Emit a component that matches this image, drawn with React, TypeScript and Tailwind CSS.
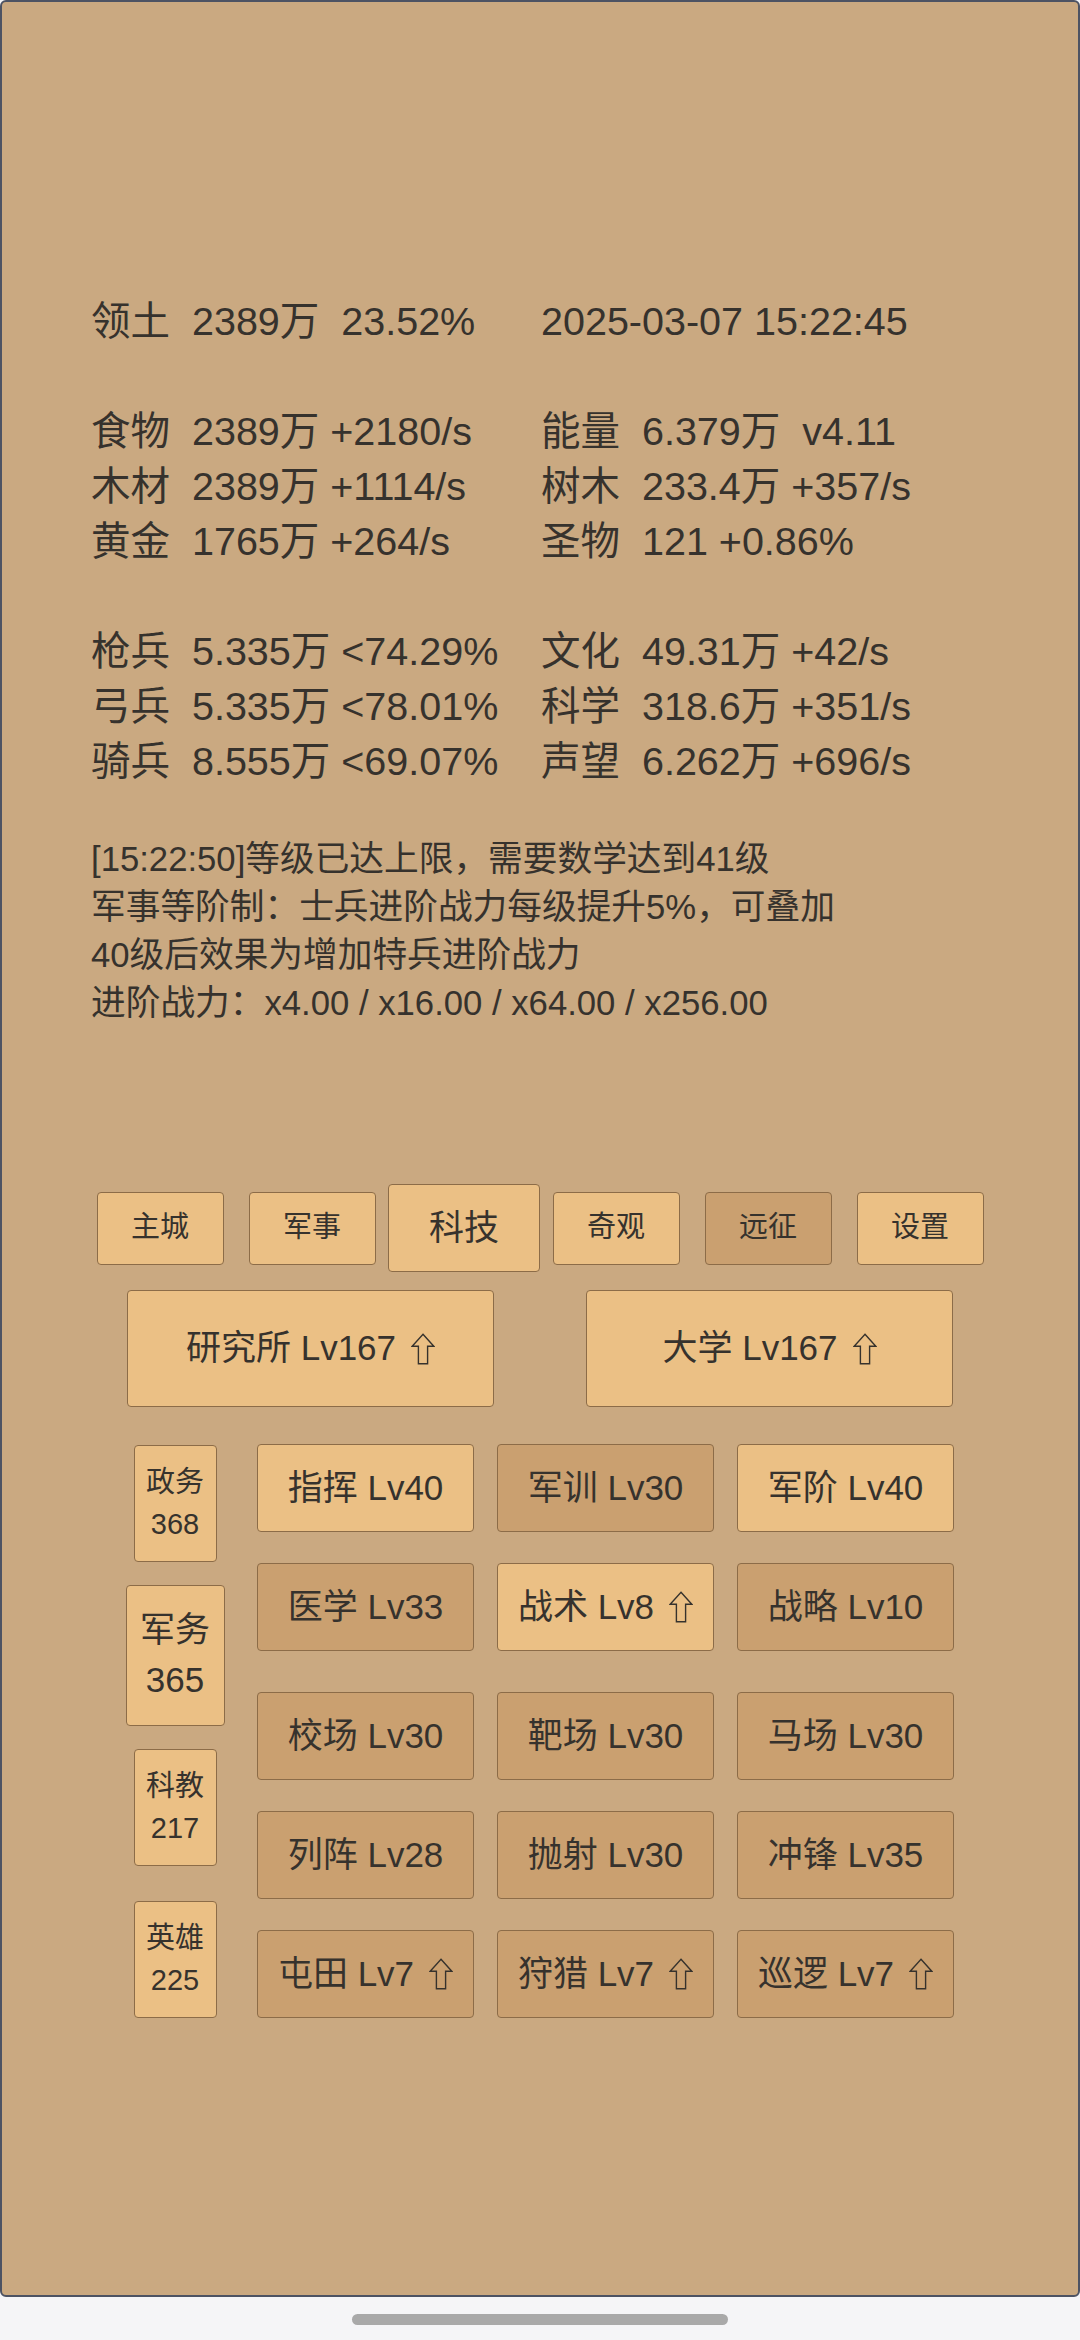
import React from "react";

const LIGHT = "bg-[#ebc085]";
const DARK = "bg-[#caa070]";

function Arrow() {
  return (
    <svg viewBox="0 0 24 32" className="w-[24px] h-[32px] ml-[15px] shrink-0" aria-hidden="true">
      <path
        d="M12 1.2 L22.8 13.2 L16.6 13.2 L16.6 30.8 L7.4 30.8 L7.4 13.2 L1.2 13.2 Z"
        fill="none"
        stroke="#36322d"
        strokeWidth="1.4"
        strokeLinejoin="miter"
      />
    </svg>
  );
}

const stats: [string, string][] = [
  ["领土  2389万  23.52%", "2025-03-07 15:22:45"],
  ["", ""],
  ["食物  2389万 +2180/s", "能量  6.379万  v4.11"],
  ["木材  2389万 +1114/s", "树木  233.4万 +357/s"],
  ["黄金  1765万 +264/s", "圣物  121 +0.86%"],
  ["", ""],
  ["枪兵  5.335万 <74.29%", "文化  49.31万 +42/s"],
  ["弓兵  5.335万 <78.01%", "科学  318.6万 +351/s"],
  ["骑兵  8.555万 <69.07%", "声望  6.262万 +696/s"],
];

const messages = [
  "[15:22:50]等级已达上限，需要数学达到41级",
  "军事等阶制：士兵进阶战力每级提升5%，可叠加",
  "40级后效果为增加特兵进阶战力",
  "进阶战力：x4.00 / x16.00 / x64.00 / x256.00",
];

const tabs = [
  { l: "主城" },
  { l: "军事" },
  { l: "科技", sel: true },
  { l: "奇观" },
  { l: "远征", dark: true },
  { l: "设置" },
];

const side = [
  { a: "政务", b: "368" },
  { a: "军务", b: "365", sel: true },
  { a: "科教", b: "217" },
  { a: "英雄", b: "225" },
];

type G = { l: string; dark?: boolean; up?: boolean };
const group1: G[] = [
  { l: "指挥 Lv40" },
  { l: "军训 Lv30", dark: true },
  { l: "军阶 Lv40" },
  { l: "医学 Lv33", dark: true },
  { l: "战术 Lv8", up: true },
  { l: "战略 Lv10", dark: true },
];
const group2: G[] = [
  { l: "校场 Lv30", dark: true },
  { l: "靶场 Lv30", dark: true },
  { l: "马场 Lv30", dark: true },
  { l: "列阵 Lv28", dark: true },
  { l: "抛射 Lv30", dark: true },
  { l: "冲锋 Lv35", dark: true },
  { l: "屯田 Lv7", dark: true, up: true },
  { l: "狩猎 Lv7", dark: true, up: true },
  { l: "巡逻 Lv7", dark: true, up: true },
];

function GridBtn({ g }: { g: G }) {
  return (
    <div
      className={`${g.dark ? DARK : LIGHT} h-[88px] border border-[#8c6c48] rounded-[4px] flex items-center justify-center text-[35px] leading-[48px] whitespace-pre`}
    >
      <span>{g.l}</span>
      {g.up && <Arrow />}
    </div>
  );
}

export default function App() {
  return (
    <div className="w-[1080px] h-[2340px] bg-[#f5f5f7] font-['Liberation_Sans','Noto_Sans_CJK_SC',sans-serif] text-[#36322d]">
      <div className="h-[2297px] bg-[#caa981] border-2 border-[#4d5363] rounded-[6px] flex flex-col">
        {/* stats */}
        <div className="pt-[292px] pl-[89px] text-[39.5px] leading-[55px]">
          {stats.map((r, i) => (
            <div key={i} className="grid grid-cols-[450px_1fr] h-[55px] whitespace-pre">
              <div>{r[0]}</div>
              <div>{r[1]}</div>
            </div>
          ))}
        </div>

        {/* messages */}
        <div className="mt-[46px] pl-[89px] text-[34.7px] leading-[48px]">
          {messages.map((m, i) => (
            <div key={i} className="h-[48px] whitespace-pre">
              {m}
            </div>
          ))}
        </div>

        {/* tabs */}
        <div className="mt-[157px] h-[88px] flex justify-center items-center">
          {tabs.map((t) => (
            <div key={t.l} className="w-[152px] h-[88px] flex items-center justify-center">
              <div
                className={`${t.sel ? "w-[152px] h-[88px] text-[35px]" : "w-[127px] h-[73px] text-[29px]"} ${
                  t.dark ? DARK : LIGHT
                } border border-[#8c6c48] rounded-[4px] flex items-center justify-center`}
              >
                {t.l}
              </div>
            </div>
          ))}
        </div>

        {/* big buttons */}
        <div className="mt-[18px] flex justify-center gap-[92px]">
          {["研究所 Lv167", "大学 Lv167"].map((b) => (
            <div
              key={b}
              className={`${LIGHT} w-[367px] h-[117px] border border-[#8c6c48] rounded-[4px] flex items-center justify-center text-[35px] whitespace-pre`}
            >
              <span>{b}</span>
              <Arrow />
            </div>
          ))}
        </div>

        {/* lower section */}
        <div className="mt-[20px] pl-[123px] flex items-start">
          <div className="w-[100px] flex flex-col">
            {side.map((s) => (
              <div key={s.a} className="h-[152px] flex items-center justify-center">
                <div
                  className={`${LIGHT} ${
                    s.sel ? "w-[99px] h-[141px] text-[35px] leading-[50px]" : "w-[83px] h-[117px] text-[29px] leading-[42px]"
                  } border border-[#8c6c48] rounded-[4px] flex flex-col items-center justify-center`}
                >
                  <div>{s.a}</div>
                  <div>{s.b}</div>
                </div>
              </div>
            ))}
          </div>
          <div className="ml-[32px] mt-[17px] flex flex-col">
            <div className="grid grid-cols-[217px_217px_217px] gap-x-[23px] gap-y-[31px]">
              {group1.map((g) => (
                <GridBtn key={g.l} g={g} />
              ))}
            </div>
            <div className="mt-[41px] grid grid-cols-[217px_217px_217px] gap-x-[23px] gap-y-[31px]">
              {group2.map((g) => (
                <GridBtn key={g.l} g={g} />
              ))}
            </div>
          </div>
        </div>
      </div>
      <div className="mt-[17px] mx-auto w-[376px] h-[11px] rounded-full bg-[#a9a9a9]" />
    </div>
  );
}
